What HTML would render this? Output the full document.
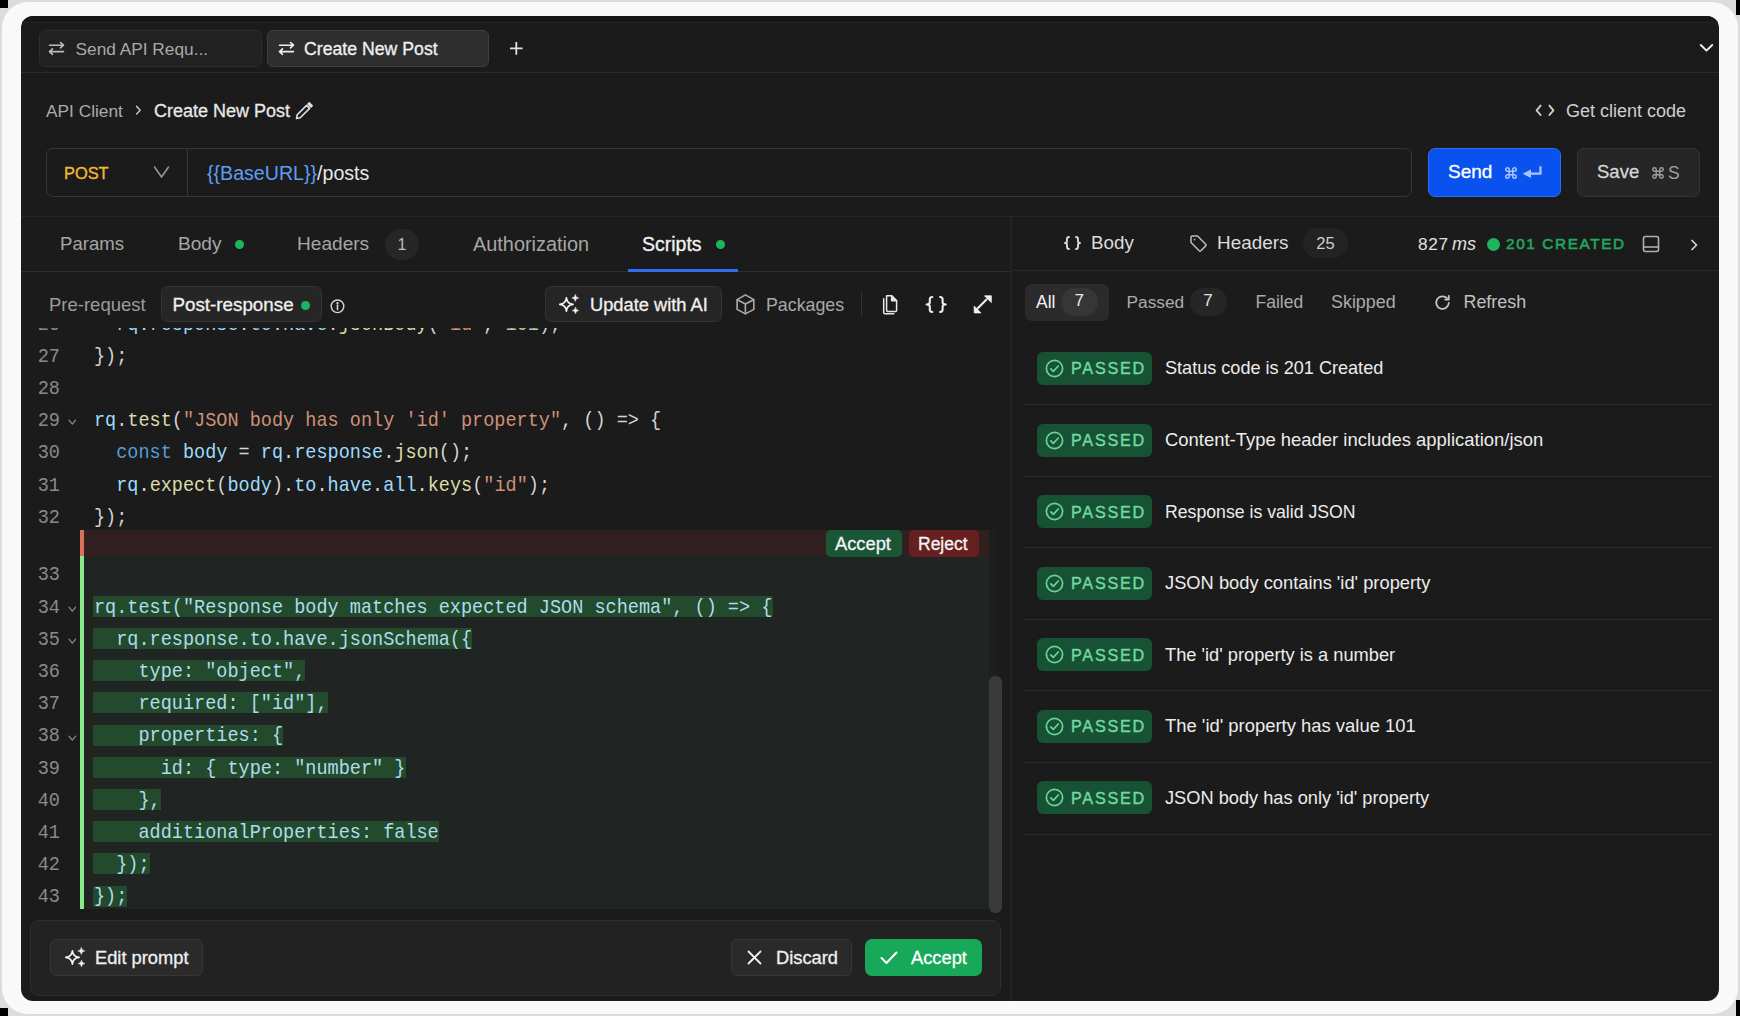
<!DOCTYPE html>
<html><head><meta charset="utf-8">
<style>
*{box-sizing:border-box;margin:0;padding:0}
html,body{width:1740px;height:1016px;overflow:hidden;background:#dcdcdc;font-family:"Liberation Sans",sans-serif;-webkit-font-smoothing:antialiased;}
.a{position:absolute}
.t{position:absolute;white-space:nowrap;line-height:20px;height:20px}
.md{-webkit-text-stroke:0.3px currentColor}
svg{position:absolute;overflow:visible}
.mono{font-family:"Liberation Mono",monospace}
#frame{left:2px;top:2px;width:1736px;height:1012px;border-radius:26px;background:#f9f9f9}
#panel{left:21px;top:16px;width:1698px;height:985px;border-radius:12px;background:#1b1b1b;overflow:hidden}
.hl{position:absolute;height:1px;background:#2a2a2a}
.vl{position:absolute;width:1px;background:#2a2a2a}
.btn{position:absolute;border-radius:6px;border:1px solid #333;background:#242424}
.dot{position:absolute;width:9px;height:9px;border-radius:50%;background:#1fb35e}
.badge{position:absolute;border-radius:16px;background:#262626;color:#bdbdbd;text-align:center}
.ln{position:absolute;left:21px;width:39px;transform:scaleY(1.12);text-align:right;color:#8a8a8a;font-family:"Liberation Mono",monospace;font-size:18.55px;line-height:32px;height:32px}
.cl{position:absolute;left:94px;transform:scaleY(1.12);white-space:pre;font-family:"Liberation Mono",monospace;font-size:18.55px;line-height:32px;height:32px;color:#d4d4d4}
.k{color:#569cd6}.v{color:#9cdcfe}.f{color:#dcdcaa}.s{color:#ce9178}.n{color:#b5cea8}
.gh{position:absolute;left:93px;height:21px;background:#244a2d}
.pass{position:absolute;left:1037px;width:115px;height:33px;border-radius:6px;background:#185234}
.ptxt{position:absolute;left:1071px;color:#6fd9a0;font-size:16.2px;letter-spacing:1.75px;-webkit-text-stroke:0.4px #6fd9a0;line-height:20px;height:20px}
.rtxt{position:absolute;left:1165px;color:#ececec;font-size:18.1px;line-height:20px;height:20px;white-space:nowrap}
.sep{position:absolute;left:1024px;width:688px;height:1px;background:#2a2a2a}
</style></head>
<body>
<div class="a" style="left:0;top:0;width:8px;height:8px;background:#000"></div>
<div class="a" style="left:1736px;top:0;width:4px;height:15px;background:#000"></div>
<div class="a" style="left:0;top:1008px;width:8px;height:8px;background:#000"></div>
<div class="a" style="left:1736px;top:1000px;width:4px;height:16px;background:#000"></div>
<div id="frame" class="a"></div>
<div id="panel" class="a"><div class="a" style="left:0;top:0;width:1698px;height:6px;background:#171717"></div><div class="a" style="left:0;top:6px;width:1698px;height:1px;background:#242424"></div></div>

<!-- ===== top tab bar ===== -->
<div class="hl" style="left:21px;top:72px;width:1698px;background:#2b2b2b"></div>
<div class="btn" style="left:39px;top:30px;width:223px;height:37px;background:#212121;border-color:#2d2d2d"></div>
<div class="btn" style="left:267px;top:30px;width:222px;height:37px;background:#2e2e2e;border-color:#3f3f3f"></div>
<svg style="left:48px;top:42px" width="17" height="13" viewBox="0 0 17 13" fill="none" stroke="#bdbdbd" stroke-width="1.6" stroke-linecap="round" stroke-linejoin="round"><path d="M1.5 3.2H15.5M12.5 0.5L15.5 3.2L12.5 5.9M15.5 9.6H1.5M4.5 6.9L1.5 9.6L4.5 12.3"/></svg>
<div class="t" style="left:75.5px;top:39px;font-size:17.3px;color:#a9a9a9">Send API Requ...</div>
<svg style="left:278px;top:42px" width="17" height="13" viewBox="0 0 17 13" fill="none" stroke="#efefef" stroke-width="1.6" stroke-linecap="round" stroke-linejoin="round"><path d="M1.5 3.2H15.5M12.5 0.5L15.5 3.2L12.5 5.9M15.5 9.6H1.5M4.5 6.9L1.5 9.6L4.5 12.3"/></svg>
<div class="t md" style="left:304px;top:39px;font-size:17.7px;color:#f0f0f0">Create New Post</div>
<svg style="left:509.5px;top:42px" width="13" height="13" viewBox="0 0 13 13" fill="none" stroke="#e0e0e0" stroke-width="1.8"><path d="M6.3 0V12.8M0 6.4H12.6"/></svg>
<svg style="left:1699px;top:42px" width="15" height="10" viewBox="0 0 15 10" fill="none" stroke="#f0f0f0" stroke-width="1.9" stroke-linecap="round" stroke-linejoin="round"><path d="M1.8 3L7.5 8.6L13.2 3"/></svg>

<!-- ===== breadcrumb ===== -->
<div class="t" style="left:46px;top:100.5px;font-size:17.3px;color:#ababab">API Client</div>
<svg style="left:134px;top:104px" width="8" height="12" viewBox="0 0 8 12" fill="none" stroke="#bdbdbd" stroke-width="1.6" stroke-linecap="round" stroke-linejoin="round"><path d="M2.6 2.4L6.2 6.2L2.6 10"/></svg>
<div class="t md" style="left:154px;top:100.5px;font-size:18px;color:#e8e8e8">Create New Post</div>
<svg style="left:295px;top:102px" width="18" height="18" viewBox="0 0 18 18" fill="none" stroke="#e0e0e0" stroke-width="1.6" stroke-linejoin="round"><path d="M1.5 16.5L2.2 12.8L11.6 3.4L14.6 6.4L5.2 15.8Z"/><path d="M13 2L14.2 0.8L17.2 3.8L16 5Z" fill="#e0e0e0"/></svg>
<svg style="left:1535px;top:104px" width="20" height="12" viewBox="0 0 20 12" fill="none" stroke="#d0d0d0" stroke-width="1.9" stroke-linecap="round" stroke-linejoin="round"><path d="M5.6 1.6L1.6 6.3L5.6 11M14.4 1.6L18.4 6.3L14.4 11"/></svg>
<div class="t" style="left:1566px;top:101px;font-size:18px;color:#cfcfcf">Get client code</div>

<!-- ===== url bar ===== -->
<div class="a" style="left:46px;top:148px;width:1366px;height:49px;border:1px solid #363636;border-radius:7px;background:#1b1b1b"></div>
<div class="vl" style="left:187px;top:149px;height:47px;background:#363636"></div>
<div class="t" style="left:64px;top:162.5px;font-size:16.4px;color:#f2b82e;-webkit-text-stroke:0.35px #f2b82e">POST</div>
<svg style="left:153px;top:166px" width="17" height="12" viewBox="0 0 17 12" fill="none" stroke="#9a9a9a" stroke-width="1.5" stroke-linecap="round" stroke-linejoin="round"><path d="M1.5 1L8.5 11L15.5 1"/></svg>
<div class="t" style="left:207px;top:163px;font-size:19.6px;color:#e8e8e8"><span style="color:#5f9ef5">{{BaseURL}}</span>/posts</div>
<div class="a" style="left:1428px;top:148px;width:133px;height:49px;border-radius:7px;background:#0a52ee;border:1px solid #2d6df3"></div>
<div class="t" style="left:1448px;top:162px;font-size:19px;color:#ffffff;-webkit-text-stroke:0.3px #fff">Send</div>
<svg style="left:1504px;top:166px" width="14" height="14" viewBox="0 0 24 24" fill="none" stroke="#a9c2ff" stroke-width="2.6" stroke-linecap="round" stroke-linejoin="round"><path d="M15 6v12a3 3 0 1 0 3-3H6a3 3 0 1 0 3 3V6a3 3 0 1 0-3 3h12a3 3 0 1 0-3-3"/></svg>
<svg style="left:1522px;top:165px" width="20" height="14" viewBox="0 0 20 14" fill="#a9c2ff" stroke="none"><path d="M17.3 1.2H19.6V9.8H8.8V7.6H17.3Z"/><path d="M0.6 8.7L9 4.5V12.9Z"/></svg>
<div class="a" style="left:1577px;top:148px;width:123px;height:49px;border-radius:7px;background:#262626;border:1px solid #343434"></div>
<div class="t md" style="left:1597px;top:162px;font-size:18.5px;color:#d6d6d6">Save</div>
<svg style="left:1651px;top:166px" width="14" height="14" viewBox="0 0 24 24" fill="none" stroke="#a0a0a0" stroke-width="2.4" stroke-linecap="round" stroke-linejoin="round"><path d="M15 6v12a3 3 0 1 0 3-3H6a3 3 0 1 0 3 3V6a3 3 0 1 0-3 3h12a3 3 0 1 0-3-3"/></svg>
<div class="t" style="left:1668px;top:162.5px;font-size:17.5px;color:#a0a0a0">S</div>

<div class="hl" style="left:21px;top:216px;width:1698px;background:#262626"></div>
<div class="vl" style="left:1010px;top:216px;height:785px;width:2px;background:#242424"></div>

<div class="t" style="left:60px;top:234px;font-size:18.6px;color:#a6a6a6;">Params</div>
<div class="t" style="left:178px;top:234px;font-size:19.1px;color:#a6a6a6;">Body</div>
<div class="dot" style="left:235px;top:240px"></div>
<div class="t" style="left:297px;top:234px;font-size:19.1px;color:#a6a6a6;">Headers</div>
<div class="badge" style="left:385px;top:229px;width:34px;height:31px;line-height:31px;font-size:16px;color:#bdbdbd">1</div>
<div class="t" style="left:473px;top:234px;font-size:19.9px;color:#a6a6a6;">Authorization</div>
<div class="t" style="left:642px;top:234px;font-size:19.5px;color:#f2f2f2;-webkit-text-stroke:0.3px #f2f2f2">Scripts</div>
<div class="dot" style="left:715.5px;top:240px"></div>
<div class="hl" style="left:21px;top:271px;width:989px;background:#2e2e2e"></div>
<div class="a" style="left:628px;top:269px;width:110px;height:3px;background:#2f6cf0"></div>
<div class="a" style="left:21px;top:327.5px;width:989px;height:592.5px;overflow:hidden">
<div class="a" style="left:59px;top:202.0px;width:908.5px;height:26.5px;background:#321f1f"></div>
<div class="a" style="left:59px;top:202.0px;width:4px;height:26.5px;background:#d9705c"></div>
<div class="a" style="left:59px;top:228.5px;width:908.5px;height:352.70000000000005px;background:#202422"></div>
<div class="a" style="left:59px;top:228.5px;width:4px;height:352.70000000000005px;background:#88ea8a"></div>
<div class="a" style="left:967.5px;top:202.0px;width:7px;height:379.20000000000005px;background:#1c1f1e"></div>
<div class="a" style="left:805px;top:202.5px;width:76px;height:27px;border-radius:5px;background:#1a5636"></div>
<div class="t" style="left:814px;top:206.0px;font-size:18.3px;color:#f4f4f4;-webkit-text-stroke:0.3px #f4f4f4">Accept</div>
<div class="a" style="left:887.5px;top:202.5px;width:70px;height:27px;border-radius:5px;background:#681f1f"></div>
<div class="t" style="left:897px;top:206.0px;font-size:17.5px;color:#f4f4f4;-webkit-text-stroke:0.3px #f4f4f4">Reject</div>
<div class="ln" style="left:0;top:-17.9px">26</div>
<div class="cl" style="left:73px;top:-17.9px">  <span class="v">rq</span>.<span class="v">response</span>.<span class="v">to</span>.<span class="v">have</span>.<span class="f">jsonBody</span>(<span class="s">"id"</span>, <span class="n">101</span>);</div>
<div class="ln" style="left:0;top:14.3px">27</div>
<div class="cl" style="left:73px;top:14.3px">});</div>
<div class="ln" style="left:0;top:46.5px">28</div>
<div class="cl" style="left:73px;top:46.5px"></div>
<div class="ln" style="left:0;top:78.7px">29</div>
<svg style="left:46.5px;top:91.8px" width="9" height="7" viewBox="0 0 9 7" fill="none" stroke="#8a8a8a" stroke-width="1.3" stroke-linecap="round" stroke-linejoin="round"><path d="M1 1.2L4.3 5.1L7.6 1.2"/></svg>
<div class="cl" style="left:73px;top:78.7px"><span class="v">rq</span>.<span class="f">test</span>(<span class="s">"JSON body has only 'id' property"</span>, () =&gt; {</div>
<div class="ln" style="left:0;top:110.9px">30</div>
<div class="cl" style="left:73px;top:110.9px">  <span class="k">const</span> <span class="v">body</span> = <span class="v">rq</span>.<span class="v">response</span>.<span class="f">json</span>();</div>
<div class="ln" style="left:0;top:143.1px">31</div>
<div class="cl" style="left:73px;top:143.1px">  <span class="v">rq</span>.<span class="f">expect</span>(<span class="v">body</span>).<span class="v">to</span>.<span class="v">have</span>.<span class="v">all</span>.<span class="f">keys</span>(<span class="s">"id"</span>);</div>
<div class="ln" style="left:0;top:175.3px">32</div>
<div class="cl" style="left:73px;top:175.3px">});</div>
<div class="ln" style="left:0;top:232.9px">33</div>
<div class="ln" style="left:0;top:265.1px">34</div>
<svg style="left:46.5px;top:278.2px" width="9" height="7" viewBox="0 0 9 7" fill="none" stroke="#8a8a8a" stroke-width="1.3" stroke-linecap="round" stroke-linejoin="round"><path d="M1 1.2L4.3 5.1L7.6 1.2"/></svg>
<div class="gh" style="left:71.7px;top:268.2px;width:680.2px"></div>
<div class="cl" style="left:73px;top:265.1px;color:#acdde9">rq.test("Response body matches expected JSON schema", () =&gt; {</div>
<div class="ln" style="left:0;top:297.3px">35</div>
<svg style="left:46.5px;top:310.4px" width="9" height="7" viewBox="0 0 9 7" fill="none" stroke="#8a8a8a" stroke-width="1.3" stroke-linecap="round" stroke-linejoin="round"><path d="M1 1.2L4.3 5.1L7.6 1.2"/></svg>
<div class="gh" style="left:71.7px;top:300.4px;width:379.7px"></div>
<div class="cl" style="left:73px;top:297.3px;color:#acdde9">  rq.response.to.have.jsonSchema({</div>
<div class="ln" style="left:0;top:329.5px">36</div>
<div class="gh" style="left:71.7px;top:332.6px;width:212.8px"></div>
<div class="cl" style="left:73px;top:329.5px;color:#acdde9">    type: "object",</div>
<div class="ln" style="left:0;top:361.7px">37</div>
<div class="gh" style="left:71.7px;top:364.8px;width:235.0px"></div>
<div class="cl" style="left:73px;top:361.7px;color:#acdde9">    required: ["id"],</div>
<div class="ln" style="left:0;top:393.9px">38</div>
<svg style="left:46.5px;top:407.0px" width="9" height="7" viewBox="0 0 9 7" fill="none" stroke="#8a8a8a" stroke-width="1.3" stroke-linecap="round" stroke-linejoin="round"><path d="M1 1.2L4.3 5.1L7.6 1.2"/></svg>
<div class="gh" style="left:71.7px;top:397.0px;width:190.5px"></div>
<div class="cl" style="left:73px;top:393.9px;color:#acdde9">    properties: {</div>
<div class="ln" style="left:0;top:426.1px">39</div>
<div class="gh" style="left:71.7px;top:429.2px;width:312.9px"></div>
<div class="cl" style="left:73px;top:426.1px;color:#acdde9">      id: { type: "number" }</div>
<div class="ln" style="left:0;top:458.3px">40</div>
<div class="gh" style="left:71.7px;top:461.4px;width:68.1px"></div>
<div class="cl" style="left:73px;top:458.3px;color:#acdde9">    },</div>
<div class="ln" style="left:0;top:490.5px">41</div>
<div class="gh" style="left:71.7px;top:493.6px;width:346.3px"></div>
<div class="cl" style="left:73px;top:490.5px;color:#acdde9">    additionalProperties: false</div>
<div class="ln" style="left:0;top:522.7px">42</div>
<div class="gh" style="left:71.7px;top:525.8px;width:57.0px"></div>
<div class="cl" style="left:73px;top:522.7px;color:#acdde9">  });</div>
<div class="ln" style="left:0;top:554.9px">43</div>
<div class="gh" style="left:71.7px;top:558.0px;width:34.7px"></div>
<div class="cl" style="left:73px;top:554.9px;color:#acdde9">});</div>
<div class="a" style="left:968px;top:348.5px;width:12.5px;height:237.29999999999995px;border-radius:6px;background:#3a3a3a"></div>
</div>
<div class="t" style="left:49px;top:294.5px;font-size:18.5px;color:#9c9c9c;">Pre-request</div>
<div class="btn" style="left:160.5px;top:286px;width:161px;height:36px;background:#262626;border-color:#333"></div>
<div class="t" style="left:172.5px;top:294.5px;font-size:18.8px;color:#f0f0f0;-webkit-text-stroke:0.3px #f0f0f0">Post-response</div>
<div class="dot" style="left:301px;top:301px"></div>
<svg style="left:330px;top:299px" width="15" height="15" viewBox="0 0 15 15" fill="none" stroke="#d4d4d4" stroke-width="1.4"><circle cx="7.5" cy="7.3" r="6.3"/><path d="M7.5 6.3V10.6" stroke-linecap="round" stroke-width="1.6"/><circle cx="7.5" cy="4.2" r="0.5" fill="#d4d4d4"/></svg>
<div class="btn" style="left:545px;top:286px;width:177px;height:36px;background:#252525;border-color:#333"></div>
<svg style="left:555px;top:290px" width="25" height="25" viewBox="0 0 25 25"><path d="M11.4 7.7Q12 13.8 18.1 14.4Q12 15 11.4 21.1Q10.8 15 4.7 14.4Q10.8 13.8 11.4 7.7Z" fill="none" stroke="#f4f4f4" stroke-width="1.6" stroke-linejoin="round"/><path d="M20.3 4.4Q20.6 7.6 23.8 7.9Q20.6 8.2 20.3 11.4Q20 8.2 16.8 7.9Q20 7.6 20.3 4.4ZM20.5 17.2Q20.8 20.2 23.8 20.5Q20.8 20.8 20.5 23.8Q20.2 20.8 17.2 20.5Q20.2 20.2 20.5 17.2Z" fill="#f4f4f4" stroke="#f4f4f4" stroke-width="0.6" stroke-linejoin="round"/></svg>
<div class="t" style="left:590px;top:295px;font-size:18.3px;color:#f0f0f0;-webkit-text-stroke:0.3px #f0f0f0">Update with AI</div>
<svg style="left:730px;top:290px" width="30" height="30" viewBox="0 0 30 30" fill="none" stroke="#ababab" stroke-width="1.6" stroke-linejoin="round" stroke-linecap="round"><path d="M15.4 4.9L23.8 9.6V19.4L15.4 23.9L7.1 19.4V9.6Z"/><path d="M7.3 9.7L15.4 14L23.6 9.7M15.4 14V23.7"/></svg>
<div class="t" style="left:766px;top:295px;font-size:17.8px;color:#a8a8a8;">Packages</div>
<div class="vl" style="left:861px;top:292px;height:24px;background:#333"></div>
<svg style="left:880px;top:292px" width="20" height="24" viewBox="0 0 20 24" fill="none" stroke="#e8e8e8" stroke-width="1.5" stroke-linejoin="round" stroke-linecap="round"><path d="M6.6 3.8H11.6L16.6 8.8V18.6C16.6 19.2 16.2 19.6 15.6 19.6H7.6C7 19.6 6.6 19.2 6.6 18.6Z"/><path d="M11.6 3.8V8.8H16.6Z" fill="#e8e8e8"/><path d="M3.7 6.8V20.4C3.7 21.3 4.2 21.8 5.1 21.8H13.8"/></svg>
<svg style="left:920px;top:292px" width="32" height="25" viewBox="0 0 32 25" fill="none" stroke="#ececec" stroke-width="2.1" stroke-linecap="round" stroke-linejoin="round"><path d="M12.3 5C10.3 5 9.8 5.8 9.8 7.5V10.3C9.8 11.6 8.9 12.5 6.6 12.5C8.9 12.5 9.8 13.4 9.8 14.7V17.5C9.8 19.2 10.3 20 12.3 20"/><path d="M20.1 5C22.1 5 22.6 5.8 22.6 7.5V10.3C22.6 11.6 23.5 12.5 25.8 12.5C23.5 12.5 22.6 13.4 22.6 14.7V17.5C22.6 19.2 22.1 20 20.1 20"/></svg>
<svg style="left:970px;top:292px" width="25" height="25" viewBox="0 0 25 25" stroke="#f0f0f0" stroke-linejoin="round"><path d="M7 17L17 7" stroke-width="2.2" fill="none"/><path d="M21.3 3.8V10.6L14.5 3.8Z" fill="#f0f0f0" stroke-width="0.8"/><path d="M4.2 20.9V14.1L11 20.9Z" fill="#f0f0f0" stroke-width="0.8"/></svg>
<div class="a" style="left:30px;top:919.5px;width:971px;height:76px;border-radius:9px;background:#222;border:1px solid #2e2e2e"></div>
<div class="btn" style="left:50px;top:939px;width:153px;height:37px;background:#2a2a2a;border-color:#363636"></div>
<svg style="left:60.8px;top:943.3px" width="25" height="25" viewBox="0 0 25 25"><path d="M11.4 7.7Q12 13.8 18.1 14.4Q12 15 11.4 21.1Q10.8 15 4.7 14.4Q10.8 13.8 11.4 7.7Z" fill="none" stroke="#f4f4f4" stroke-width="1.6" stroke-linejoin="round"/><path d="M20.3 4.4Q20.6 7.6 23.8 7.9Q20.6 8.2 20.3 11.4Q20 8.2 16.8 7.9Q20 7.6 20.3 4.4ZM20.5 17.2Q20.8 20.2 23.8 20.5Q20.8 20.8 20.5 23.8Q20.2 20.8 17.2 20.5Q20.2 20.2 20.5 17.2Z" fill="#f4f4f4" stroke="#f4f4f4" stroke-width="0.6" stroke-linejoin="round"/></svg>
<div class="t" style="left:95px;top:947.5px;font-size:18.3px;color:#f0f0f0;-webkit-text-stroke:0.3px #f0f0f0">Edit prompt</div>
<div class="btn" style="left:731px;top:939px;width:121px;height:37px;background:#2a2a2a;border-color:#363636"></div>
<svg style="left:747px;top:950px" width="15" height="15" viewBox="0 0 15 15" fill="none" stroke="#f0f0f0" stroke-width="1.8" stroke-linecap="round"><path d="M1.5 1.5L13.5 13.5M13.5 1.5L1.5 13.5"/></svg>
<div class="t" style="left:776px;top:947.5px;font-size:18.3px;color:#f0f0f0;-webkit-text-stroke:0.3px #f0f0f0">Discard</div>
<div class="a" style="left:864.5px;top:939px;width:117px;height:37px;border-radius:7px;background:#18a85a"></div>
<svg style="left:880px;top:951px" width="18" height="14" viewBox="0 0 18 14" fill="none" stroke="#ffffff" stroke-width="2" stroke-linecap="round" stroke-linejoin="round"><path d="M1.5 7L6.5 12L16.5 1.5"/></svg>
<div class="t" style="left:911px;top:947.5px;font-size:18.3px;color:#ffffff;-webkit-text-stroke:0.3px #fff">Accept</div>
<svg style="left:1064px;top:235.5px" width="17" height="14" viewBox="0 0 17 14" fill="none" stroke="#dadada" stroke-width="1.9" stroke-linecap="round" stroke-linejoin="round"><path d="M5 1C3.3 1 3 1.8 3 3V5C3 6.2 2.3 7 1 7C2.3 7 3 7.8 3 9V11C3 12.2 3.3 13 5 13"/><path d="M12 1C13.7 1 14 1.8 14 3V5C14 6.2 14.7 7 16 7C14.7 7 14 7.8 14 9V11C14 12.2 13.7 13 12 13"/></svg>
<div class="t" style="left:1091px;top:232.5px;font-size:18.8px;color:#dcdcdc;">Body</div>
<svg style="left:1190px;top:235px" width="17" height="17" viewBox="0 0 17 17" fill="none" stroke="#bdbdbd" stroke-width="1.5" stroke-linejoin="round"><path d="M1 2.2V7.5L9.2 15.7C9.7 16.2 10.4 16.2 10.9 15.7L15.7 10.9C16.2 10.4 16.2 9.7 15.7 9.2L7.5 1H2.2C1.5 1 1 1.5 1 2.2Z"/><circle cx="4.6" cy="4.6" r="0.9" fill="#bdbdbd" stroke="none"/></svg>
<div class="t" style="left:1217px;top:232.5px;font-size:18.9px;color:#dcdcdc;">Headers</div>
<div class="badge" style="left:1303px;top:228px;width:45px;height:30px;line-height:30px;font-size:16.5px;color:#cfcfcf;background:#232323">25</div>
<div class="t" style="left:1418px;top:233.5px;font-size:17.3px;color:#e0e0e0;letter-spacing:0.6px">827</div>
<div class="t" style="left:1452px;top:233.5px;font-size:18px;color:#e0e0e0;font-style:italic">ms</div>
<div class="a" style="left:1487px;top:237.5px;width:13px;height:13px;border-radius:50%;background:#20b45c"></div>
<div class="t" style="left:1506px;top:233.5px;font-size:15.3px;color:#22a95c;letter-spacing:1.63px;-webkit-text-stroke:0.55px #22a95c">201 CREATED</div>
<svg style="left:1642px;top:235px" width="18" height="18" viewBox="0 0 18 18" fill="none" stroke="#b0b0b0" stroke-width="1.6" stroke-linejoin="round"><rect x="1.5" y="1.5" width="15" height="15" rx="2"/><path d="M1.5 12H16.5"/></svg>
<svg style="left:1690px;top:238.5px" width="9" height="12" viewBox="0 0 9 12" fill="none" stroke="#d6d6d6" stroke-width="1.7" stroke-linecap="round" stroke-linejoin="round"><path d="M2 1.5L6.5 6L2 10.5"/></svg>
<div class="hl" style="left:1011px;top:270px;width:708px;background:#2a2a2a"></div>
<div class="a" style="left:1025px;top:283.5px;width:84px;height:37px;border-radius:7px;background:#2b2b2b"></div>
<div class="t" style="left:1036px;top:292px;font-size:17.5px;color:#f2f2f2;">All</div>
<div class="badge" style="left:1060.5px;top:288px;width:37.5px;height:28px;line-height:26px;font-size:17px;color:#e8e8e8;background:#363636">7</div>
<div class="t" style="left:1126.5px;top:292px;font-size:17.3px;color:#ababab;">Passed</div>
<div class="badge" style="left:1189.5px;top:288px;width:37px;height:28px;line-height:26px;font-size:17px;color:#e0e0e0;background:#262626">7</div>
<div class="t" style="left:1255.5px;top:292px;font-size:17.5px;color:#ababab;">Failed</div>
<div class="t" style="left:1331px;top:292px;font-size:17.9px;color:#ababab;">Skipped</div>
<svg style="left:1435px;top:295px" width="16" height="15" viewBox="0 0 16 15" fill="none" stroke="#c4c4c4" stroke-width="1.8" stroke-linecap="round" stroke-linejoin="round"><path d="M13.8 8A6.3 6.3 0 1 1 12 3.2"/><path d="M13.8 1V4.6H10.2" /></svg>
<div class="t" style="left:1463.5px;top:292px;font-size:17.9px;color:#c0c0c0;">Refresh</div>
<div class="pass" style="top:351.8px"></div>
<svg style="left:1044.5px;top:359.0px" width="19" height="19" viewBox="0 0 19 19" fill="none" stroke="#69d59b" stroke-width="1.7" stroke-linecap="round" stroke-linejoin="round"><circle cx="9.5" cy="9.5" r="8.1"/><path d="M5.8 9.8L8.3 12.3L13.3 7"/></svg>
<div class="ptxt" style="top:358.3px">PASSED</div>
<div class="rtxt" style="top:358.3px;font-size:18.1px">Status code is 201 Created</div>
<div class="sep" style="top:404.3px"></div>
<div class="pass" style="top:423.5px"></div>
<svg style="left:1044.5px;top:430.7px" width="19" height="19" viewBox="0 0 19 19" fill="none" stroke="#69d59b" stroke-width="1.7" stroke-linecap="round" stroke-linejoin="round"><circle cx="9.5" cy="9.5" r="8.1"/><path d="M5.8 9.8L8.3 12.3L13.3 7"/></svg>
<div class="ptxt" style="top:430.0px">PASSED</div>
<div class="rtxt" style="top:430.0px;font-size:18.46px">Content-Type header includes application/json</div>
<div class="sep" style="top:475.5px"></div>
<div class="pass" style="top:495.0px"></div>
<svg style="left:1044.5px;top:502.2px" width="19" height="19" viewBox="0 0 19 19" fill="none" stroke="#69d59b" stroke-width="1.7" stroke-linecap="round" stroke-linejoin="round"><circle cx="9.5" cy="9.5" r="8.1"/><path d="M5.8 9.8L8.3 12.3L13.3 7"/></svg>
<div class="ptxt" style="top:501.5px">PASSED</div>
<div class="rtxt" style="top:501.5px;font-size:17.68px">Response is valid JSON</div>
<div class="sep" style="top:547.0px"></div>
<div class="pass" style="top:566.5px"></div>
<svg style="left:1044.5px;top:573.7px" width="19" height="19" viewBox="0 0 19 19" fill="none" stroke="#69d59b" stroke-width="1.7" stroke-linecap="round" stroke-linejoin="round"><circle cx="9.5" cy="9.5" r="8.1"/><path d="M5.8 9.8L8.3 12.3L13.3 7"/></svg>
<div class="ptxt" style="top:573.0px">PASSED</div>
<div class="rtxt" style="top:573.0px;font-size:18.31px">JSON body contains 'id' property</div>
<div class="sep" style="top:618.6px"></div>
<div class="pass" style="top:638.0px"></div>
<svg style="left:1044.5px;top:645.2px" width="19" height="19" viewBox="0 0 19 19" fill="none" stroke="#69d59b" stroke-width="1.7" stroke-linecap="round" stroke-linejoin="round"><circle cx="9.5" cy="9.5" r="8.1"/><path d="M5.8 9.8L8.3 12.3L13.3 7"/></svg>
<div class="ptxt" style="top:644.5px">PASSED</div>
<div class="rtxt" style="top:644.5px;font-size:18.26px">The 'id' property is a number</div>
<div class="sep" style="top:690.0px"></div>
<div class="pass" style="top:709.5px"></div>
<svg style="left:1044.5px;top:716.7px" width="19" height="19" viewBox="0 0 19 19" fill="none" stroke="#69d59b" stroke-width="1.7" stroke-linecap="round" stroke-linejoin="round"><circle cx="9.5" cy="9.5" r="8.1"/><path d="M5.8 9.8L8.3 12.3L13.3 7"/></svg>
<div class="ptxt" style="top:716.0px">PASSED</div>
<div class="rtxt" style="top:716.0px;font-size:18.43px">The 'id' property has value 101</div>
<div class="sep" style="top:762.0px"></div>
<div class="pass" style="top:781.0px"></div>
<svg style="left:1044.5px;top:788.2px" width="19" height="19" viewBox="0 0 19 19" fill="none" stroke="#69d59b" stroke-width="1.7" stroke-linecap="round" stroke-linejoin="round"><circle cx="9.5" cy="9.5" r="8.1"/><path d="M5.8 9.8L8.3 12.3L13.3 7"/></svg>
<div class="ptxt" style="top:787.5px">PASSED</div>
<div class="rtxt" style="top:787.5px;font-size:18.23px">JSON body has only 'id' property</div>
<div class="sep" style="top:833.7px"></div>
</body></html>
